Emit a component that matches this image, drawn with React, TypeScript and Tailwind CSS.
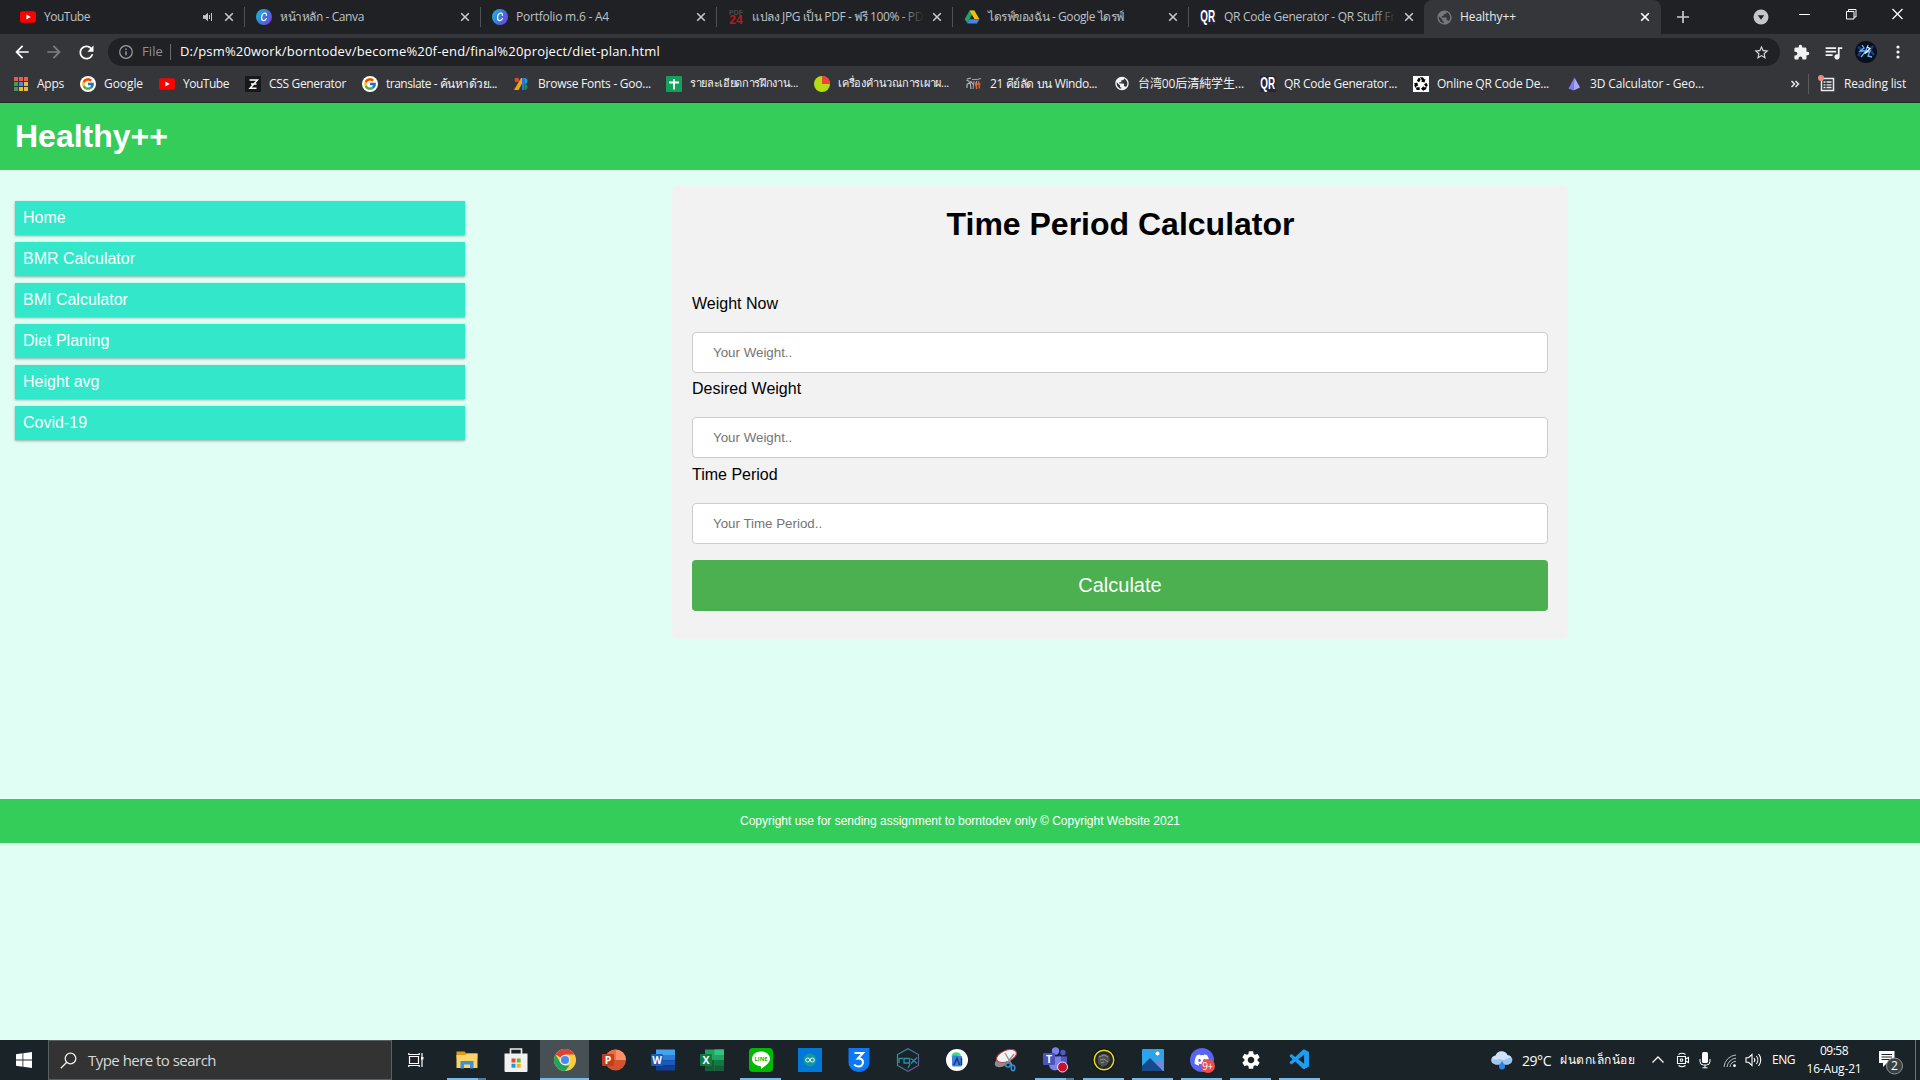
import { useLayoutEffect, useRef, useState } from "react";
import type { ReactNode } from "react";
import { FcGoogle } from "react-icons/fc";
import { MdExtension, MdQueueMusic, MdStarBorder, MdRecycling, MdPublic, MdSettings, MdRefresh, MdArrowBack, MdArrowForward } from "react-icons/md";
import { FaDiscord } from "react-icons/fa";
import { VscVscode } from "react-icons/vsc";

/* Single line of text whose tracking is adjusted so that it spans `w` pixels. */
function Fit({ w, className = "", children }: { w: number; className?: string; children: string }) {
  const ref = useRef<HTMLSpanElement>(null);
  const [spacing, setSpacing] = useState(0);
  useLayoutEffect(() => {
    const el = ref.current;
    if (!el) return;
    const natural = el.getBoundingClientRect().width;
    el.style.letterSpacing = "1px";
    const step = el.getBoundingClientRect().width - natural;
    el.style.letterSpacing = "";
    if (step > 0) setSpacing((w - natural) / step);
  }, [w, children]);
  return (
    <span className={`whitespace-nowrap ${className}`}>
      <span ref={ref} className="inline-block" style={spacing ? { letterSpacing: `${spacing}px` } : undefined}>
        {children}
      </span>
    </span>
  );
}

const YouTubeIcon = () => (
  <svg width="16" height="16" viewBox="0 0 16 16">
    <rect y="2.3" width="16" height="11.4" rx="2.6" fill="#f00" />
    <path d="M6.4 5.4v5.2L10.8 8z" fill="#fff" />
  </svg>
);
const CanvaIcon = () => (
  <svg width="16" height="16" viewBox="0 0 16 16">
    <defs>
      <linearGradient id="cv" x1="0" y1="0.2" x2="1" y2="0.8">
        <stop offset="0" stopColor="#22b3d6" />
        <stop offset="0.5" stopColor="#3a7be0" />
        <stop offset="1" stopColor="#7a3be6" />
      </linearGradient>
    </defs>
    <circle cx="8" cy="8" r="8" fill="url(#cv)" />
    <path d="M10.4 6.3c.3-1.5-.5-2.2-1.5-2.1C7 4.400 5.600 6.600 5.600 8.900c0 1.700.9 2.700 2.100 2.700 1.300 0 2.300-.9 2.800-2" fill="none" stroke="#fff" strokeWidth="1.200" strokeLinecap="round" />
  </svg>
);
const PdfIcon = () => (
  <span className="flex h-4 w-4 flex-col items-center justify-center font-['Liberation_Sans'] font-bold">
    <span className="text-[7px] leading-[6px] text-[#4a4a4d]">PDF</span>
    <span className="text-[12px] leading-[9px] text-[#b01c20]">24</span>
  </span>
);
const DriveIcon = () => (
  <svg width="16" height="16" viewBox="0 0 16 16">
    <path d="M5.600 1.500h4.800L8 5.700 3.300 13.900.6 10.200z" fill="#1fa463" />
    <path d="M5.600 1.500h4.800l5 8.800h-4.900z" fill="#fbbc05" />
    <path d="M5.500 10.300h9.900l-2.500 4.200H3.100z" fill="#4285f4" />
  </svg>
);
const QrIcon = () => (
  <span className="flex h-4 w-4 items-center justify-center bg-[#262438] text-white">
    <span className="scale-x-[0.58] font-['Liberation_Sans'] text-[17px] leading-4 font-bold">QR</span>
  </span>
);
const GlobeIcon = ({ dim }: { dim?: boolean }) => <MdPublic size={17} className={dim ? "text-[#74777b]" : "text-[#f1f3f4]"} />;
const GoogleIcon = () => (
  <span className="flex h-4 w-4 items-center justify-center rounded-full bg-white">
    <FcGoogle size={14} />
  </span>
);
const AppsIcon = () => (
  <svg width="16" height="16" viewBox="0 0 16 16">
    {["#ea5b50", "#ea5b50", "#ea5b50", "#3f9c5b", "#4a86e8", "#e9b93a", "#3f9c5b", "#e9b93a", "#e9b93a"].map((c, i) => (
      <rect key={i} x={1 + (i % 3) * 5} y={1 + Math.floor(i / 3) * 5} width="4" height="4" fill={c} />
    ))}
  </svg>
);
const ZIcon = () => (
  <svg width="16" height="16" viewBox="0 0 16 16">
    <rect width="16" height="16" fill="#17181a" />
    <path d="M4.500 4h8L5 12.200h6.500M6 8h5.500" fill="none" stroke="#fff" strokeWidth="1.400" />
  </svg>
);
const FontsIcon = () => (
  <svg width="16" height="16" viewBox="0 0 16 16">
    <circle cx="2.800" cy="4" r="2.300" fill="#ea4335" />
    <path d="M7 2h4L4.500 14H0z" fill="#f5a600" />
    <path d="M8 2h2.500v12H8z" fill="#2672e8" />
    <path d="M10.500 2a3 3 0 0 1 0 6z" fill="#1a9cf0" />
    <path d="M10.500 8a3 3 0 0 1 0 6z" fill="#1e8e4a" />
  </svg>
);
const SheetIcon = () => (
  <svg width="16" height="16" viewBox="0 0 16 16">
    <rect width="16" height="16" rx="1" fill="#12a05c" />
    <path d="M8 3v10.500M3 6.500h10" stroke="#fff" strokeWidth="1.800" />
  </svg>
);
const PieIcon = () => (
  <svg width="16" height="16" viewBox="0 0 16 16">
    <circle cx="8" cy="8" r="8" fill="#b5dd12" />
    <path d="M8 0a8 8 0 0 1 8 8H8z" fill="#f4403a" />
  </svg>
);
const SpiderIcon = () => (
  <svg width="16" height="16" viewBox="0 0 16 16" fill="none" strokeWidth="1.100">
    <path d="M.5 4l3 1.500M1 12V8.500l4-3 2 3M4 6l1 7M1 3l4-1" stroke="#b9bbbf" />
    <path d="M6 3.500h5l4-1M8 5l-1 8M10.500 5v8" stroke="#a0a2a6" />
    <path d="M9 6.500l2 6.500M12.500 5l1 7.500M10.500 8h4" stroke="#e0622c" strokeWidth="1.400" />
  </svg>
);
const RecycleIcon = () => (
  <span className="flex h-4 w-4 items-center justify-center bg-white text-black">
    <MdRecycling size={16} />
  </span>
);
const PrismIcon = () => (
  <svg width="16" height="16" viewBox="0 0 16 16">
    <path d="M8.500 1.500L2.500 12.500l5 2z" fill="#7f7bf2" />
    <path d="M8.500 1.500l5.500 10-6.500 3z" fill="#a9a6ff" />
  </svg>
);

const CloseX = ({ bright }: { bright?: boolean }) => (
  <svg width="16" height="16" viewBox="0 0 16 16" className={bright ? "text-white" : "text-[#c4c7cb]"}>
    <path d="M4.200 4.200l7.600 7.600M11.800 4.200l-7.600 7.600" stroke="currentColor" strokeWidth="1.600" />
  </svg>
);

type Tab = { icon: ReactNode; label: string; w: number; sound?: boolean; fade?: boolean };
const tabs: Tab[] = [
  { icon: <YouTubeIcon />, label: "YouTube", w: 46, sound: true },
  { icon: <CanvaIcon />, label: "หน้าหลัก - Canva", w: 84 },
  { icon: <CanvaIcon />, label: "Portfolio m.6 - A4", w: 93 },
  { icon: <PdfIcon />, label: "แปลง JPG เป็น PDF - ฟรี 100% - PD", w: 171, fade: true },
  { icon: <DriveIcon />, label: "ไดรฟ์ของฉัน - Google ไดรฟ์", w: 136 },
  { icon: <QrIcon />, label: "QR Code Generator - QR Stuff Fr", w: 171, fade: true },
];

function TabStrip() {
  return (
    <div className="flex h-[34px] bg-[#202124] pl-2 text-[12px] text-[#bdc1c6]">
      {tabs.map((t, i) => (
        <div key={i} className="relative flex w-[236px] shrink-0 items-center pl-3">
          {t.icon}
          <div className="relative ml-2 w-[172px]">
            <Fit w={t.w}>{t.label}</Fit>
            {t.fade && <div className="absolute inset-y-0 right-0 w-6 bg-linear-to-r from-transparent to-[#202124]" />}
          </div>
          {t.sound && (
            <svg width="12" height="12" viewBox="0 0 12 12" className="absolute left-[194px]">
              <path d="M1 4.300h2.200L6 1.800v8.400L3.200 7.700H1z" fill="#c4c7cb" />
              <path d="M7.500 4v4M9.500 2v8" stroke="#c4c7cb" />
            </svg>
          )}
          <span className="ml-[5px] flex">
            <CloseX />
          </span>
          {i < tabs.length - 1 && <span className="absolute top-[7px] -right-px h-5 w-px bg-[#4d5054]" />}
        </div>
      ))}
      <div className="relative flex w-[237px] shrink-0 items-center rounded-t-lg bg-[#35363a] pl-3 text-[#e8eaed]">
        <GlobeIcon dim />
        <div className="ml-[7px] w-[172px]">
          <Fit w={56}>Healthy++</Fit>
        </div>
        <span className="ml-[5px] flex">
          <CloseX bright />
        </span>
      </div>
      <div className="flex flex-1 items-center text-[#c8cacd]">
        <svg width="14" height="14" viewBox="0 0 14 14" className="ml-[15px]">
          <path d="M7 1v12M1 7h12" stroke="currentColor" strokeWidth="1.700" />
        </svg>
        <svg width="16" height="16" viewBox="0 0 16 16" className="ml-[63px]">
          <circle cx="8" cy="8" r="7.500" fill="#c3c6ca" />
          <path d="M4.800 6.200h6.400L8 10.700z" fill="#202124" />
        </svg>
        <svg width="110" height="14" viewBox="0 0 110 14" fill="none" stroke="#fff" className="mb-[6px] ml-[28px] shrink-0">
          <path d="M2 7.500h11" />
          <path d="M49.500 4.500h7.500v7.500h-7.500zM51.500 4.500v-2h7.500v7.500h-2" />
          <path d="M95.500 2l10 10M105.500 2l-10 10" strokeWidth="1.200" />
        </svg>
      </div>
    </div>
  );
}

function Toolbar() {
  return (
    <div className="flex h-9 items-center text-white">
      <MdArrowBack size={20} className="ml-3" />
      <MdArrowForward size={20} className="ml-3 text-[#7d8084]" />
      <MdRefresh size={21} className="ml-3" />
      <div className="ml-[11px] flex h-7 w-[1672px] items-center rounded-full bg-[#202124] text-[14px]">
        <svg width="14" height="14" viewBox="0 0 14 14" className="ml-[11px]" fill="none" stroke="#9aa0a6">
          <circle cx="7" cy="7" r="6.300" strokeWidth="1.200" />
          <path d="M7 6.300v4M7 3.600v1.400" strokeWidth="1.400" />
        </svg>
        <Fit w={21} className="ml-[9px] text-[13px] text-[#8e9297]">File</Fit>
        <span className="ml-[7px] h-4 w-px bg-[#6a6d71]" />
        <Fit w={480} className="ml-[9px] text-[13px]">D:/psm%20work/borntodev/become%20f-end/final%20project/diet-plan.html</Fit>
        <MdStarBorder size={17} className="mr-[10px] ml-auto text-[#d5d7da]" />
      </div>
      <MdExtension size={17} className="ml-[13px] text-[#f1f3f4]" />
      <MdQueueMusic size={21} className="ml-[13px] text-[#f1f3f4]" />
      <svg width="22" height="22" viewBox="0 0 22 22" className="ml-[11px]">
        <circle cx="11" cy="11" r="11" fill="#07101f" />
        <path d="M3 6l4 3-4 6M18 5l-3 4 4 5" stroke="#1b3f78" strokeWidth="2.500" fill="none" />
        <path d="M7 4l2 3-4 3h6l-5 6M13 4l-3 8 5-2-2 5 4 1" stroke="#69b4ff" strokeWidth="1.300" fill="none" />
        <path d="M12 6l3 1.500-5 5" stroke="#fff" strokeWidth="1.200" fill="none" />
      </svg>
      <svg width="4" height="16" viewBox="0 0 4 16" className="ml-[19px]" fill="#f1f3f4">
        <circle cx="2" cy="3" r="1.600" />
        <circle cx="2" cy="8" r="1.600" />
        <circle cx="2" cy="13" r="1.600" />
      </svg>
    </div>
  );
}

/* `slot` is the full width that the entry takes, `w` the width of its label. */
const bookmarks: { icon: ReactNode; label: string; w: number; slot: string }[] = [
  { icon: <AppsIcon />, label: "Apps", w: 27, slot: "w-[67px]" },
  { icon: <GoogleIcon />, label: "Google", w: 39, slot: "w-[79px]" },
  { icon: <YouTubeIcon />, label: "YouTube", w: 46, slot: "w-[86px]" },
  { icon: <ZIcon />, label: "CSS Generator", w: 77, slot: "w-[117px]" },
  { icon: <GoogleIcon />, label: "translate - ค้นหาด้วย...", w: 111, slot: "w-[152px]" },
  { icon: <FontsIcon />, label: "Browse Fonts - Goo...", w: 113, slot: "w-[152px]" },
  { icon: <SheetIcon />, label: "รายละเอียดการฝึกงาน...", w: 108, slot: "w-[148px] text-[11px]" },
  { icon: <PieIcon />, label: "เครื่องคำนวณการเผาผ...", w: 111, slot: "w-[152px] text-[11px]" },
  { icon: <SpiderIcon />, label: "21 คีย์ลัด บน Windo...", w: 107, slot: "w-[148px]" },
  { icon: <GlobeIcon />, label: "台湾00后清純学生...", w: 106, slot: "w-[146px]" },
  { icon: <QrIcon />, label: "QR Code Generator...", w: 113, slot: "w-[153px]" },
  { icon: <RecycleIcon />, label: "Online QR Code De...", w: 112, slot: "w-[153px]" },
  { icon: <PrismIcon />, label: "3D Calculator - Geo...", w: 114, slot: "w-[154px]" },
];
const slotClass = "flex shrink-0 items-center gap-2";

function Bookmarks() {
  return (
    <div className="flex h-[33px] items-center border-b border-[#1d2a22] pb-[5px] pl-[13px] text-[12px] text-[#f1f3f4]">
      {bookmarks.map((b, i) => (
        <div key={i} className={`${slotClass} ${b.slot}`}>
          <span className="flex w-4 shrink-0 justify-center">{b.icon}</span>
          <Fit w={b.w}>{b.label}</Fit>
        </div>
      ))}
      <svg width="10" height="10" viewBox="0 0 10 10" className="ml-[70px]" fill="none" stroke="#e8eaed" strokeWidth="1.500">
        <path d="M1.500 2l3 3-3 3M5.500 2l3 3-3 3" />
      </svg>
      <span className="ml-2 h-5 w-px bg-[#5a5c60]" />
      <svg width="18" height="18" viewBox="0 0 18 18" className="ml-[9px]">
        <path d="M3.500 3.500h12v12h-12z" fill="none" stroke="#e8eaed" strokeWidth="1.500" />
        <path d="M5.500 7h2M8.500 7h5M5.500 9.800h2M8.500 9.800h5M5.500 12.500h2M8.500 12.500h5" stroke="#e8eaed" strokeWidth="1.300" />
        <circle cx="3" cy="3" r="3" fill="#f28b82" />
      </svg>
      <Fit w={62} className="ml-[8px]">Reading list</Fit>
    </div>
  );
}

const menu = ["Home", "BMR Calculator", "BMI Calculator", "Diet Planing", "Height avg", "Covid-19"];
const fields = [
  { label: "Weight Now", hint: "Your Weight.." },
  { label: "Desired Weight", hint: "Your Weight.." },
  { label: "Time Period", hint: "Your Time Period.." },
];

function Page() {
  return (
    <div className="h-[937px] bg-[#e1fef5] font-['Liberation_Sans',Arial,sans-serif] text-base text-black">
      <header className="h-[67px] bg-[#34cd5a] px-[15px] pt-[15px]">
        <h1 className="text-[32px] leading-[37px] font-bold text-white">Healthy++</h1>
      </header>
      <main className="flex h-[629px] items-start">
        <ul className="mt-[31px] ml-[15px] flex w-[450px] flex-col gap-[7px]">
          {menu.map((m) => (
            <li key={m} className="h-[34px] bg-[#33e7ca] pl-2 leading-[33px] text-white shadow-[0_1px_3px_rgba(0,0,0,0.12),0_1px_2px_rgba(0,0,0,0.24)]">
              {m}
            </li>
          ))}
        </ul>
        <section className="mt-4 ml-[207px] h-[452.500px] w-[896px] rounded-[5px] bg-[#f2f2f2] px-5 pt-5">
          <h2 className="pl-px text-center text-[32px] leading-[37px] font-bold">Time Period Calculator</h2>
          <form className="mt-[52px]">
            {fields.map((f) => (
              <label key={f.label} className="flex flex-col pb-[7.330px]">
                <span className="h-[37px] leading-[18px]">{f.label}</span>
                <input
                  placeholder={f.hint}
                  className="h-[41px] w-full rounded border border-[#ccc] bg-white px-5 text-[13.333px] placeholder:text-[#757575]"
                />
              </label>
            ))}
            <button type="button" className="mt-[9px] block h-[51px] w-full rounded bg-[#4caf50] pb-px text-center text-[20px] text-white">
              Calculate
            </button>
          </form>
        </section>
      </main>
      <footer className="flex h-[44px] items-center justify-center bg-[#34cd5a] text-[12px] text-white">
        <Fit w={440}>Copyright use for sending assignment to borntodev only © Copyright Website 2021</Fit>
      </footer>
    </div>
  );
}

const FolderIcon = () => (
  <svg width="24" height="24" viewBox="0 0 24 24">
    <path d="M1.500 3.500h8l2 2h11v5h-21z" fill="#d99b1c" />
    <path d="M1.500 7h9l1.500-1.500h10.500v14.500h-21z" fill="#fbd267" />
    <path d="M5.500 20.500v-7.500h13v7.500h-3.500v-4h-6v4z" fill="#3a93d6" />
  </svg>
);
const StoreIcon = () => (
  <svg width="24" height="24" viewBox="0 0 24 24">
    <path d="M6.500 7V1h11v6" fill="none" stroke="#eee" strokeWidth="1.600" />
    <path d="M.5 5.500h23V23a1 1 0 0 1-1 1h-21a1 1 0 0 1-1-1z" fill="#f1f1f1" />
    <path d="M7.500 10.500h4v4h-4z" fill="#e04e2a" />
    <path d="M12.700 10.500h4v4h-4z" fill="#7ab51d" />
    <path d="M7.500 15.700h4v4h-4z" fill="#0f9fe8" />
    <path d="M12.700 15.700h4v4h-4z" fill="#f7b50c" />
  </svg>
);
const ChromeIcon = () => (
  <svg width="22" height="22" viewBox="0 0 22 22">
    <circle cx="11" cy="11" r="11" fill="#fbcd3b" />
    <path d="M11 11L1.500 5.500A11 11 0 0 1 20.500 5.500H11z" fill="#dc4437" />
    <path d="M1.500 5.500L6.300 13.800 11 16.500h4.500L11 22A11 11 0 0 1 1.500 5.500z" fill="#1da362" />
    <circle cx="11" cy="11" r="5.200" fill="#f3f3f3" />
    <circle cx="11" cy="11" r="4.100" fill="#4a8af4" />
  </svg>
);
const PowerPointIcon = () => (
  <svg width="24" height="24" viewBox="0 0 24 24">
    <circle cx="13.500" cy="12" r="10.500" fill="#d35230" />
    <path d="M13.500 1.500A10.500 10.500 0 0 1 24 12H13.500z" fill="#ff8f6b" />
    <path d="M13.500 1.500A10.500 10.500 0 0 0 3 12h10.500z" fill="#ed6c47" />
    <rect y="6" width="12" height="12" rx="1" fill="#c43e1c" />
    <text x="6" y="15.700" textAnchor="middle" fontSize="10.500" fontWeight="700" fontFamily="Open Sans" fill="#fff">P</text>
  </svg>
);
const WordIcon = () => (
  <svg width="24" height="24" viewBox="0 0 24 24">
    <path d="M5 1.500h19V7H5z" fill="#41a5ee" />
    <path d="M5 7h19v5.200H5z" fill="#2b7cd3" />
    <path d="M5 12.200h19v5.200H5z" fill="#185abd" />
    <path d="M5 17.400h19v5.100H5z" fill="#103f91" />
    <rect y="6" width="12" height="12" rx="1" fill="#185abd" />
    <text x="6" y="15.500" textAnchor="middle" fontSize="10" fontWeight="700" fontFamily="Open Sans" fill="#fff">W</text>
  </svg>
);
const ExcelIcon = () => (
  <svg width="24" height="24" viewBox="0 0 24 24">
    <path d="M5 1.500h19v21H5z" fill="#21a366" />
    <path d="M14.500 1.500H24V7h-9.500z" fill="#33c481" />
    <path d="M5 12h9.500v10.500H5z" fill="#185c37" />
    <path d="M14.500 12H24v5.200h-9.500z" fill="#107c41" />
    <path d="M14.500 17.200H24v5.300h-9.500z" fill="#185c37" />
    <rect y="6" width="12" height="12" rx="1" fill="#107c41" />
    <text x="6" y="15.700" textAnchor="middle" fontSize="10.500" fontWeight="700" fontFamily="Open Sans" fill="#fff">X</text>
  </svg>
);
const LineIcon = () => (
  <svg width="24" height="24" viewBox="0 0 24 24">
    <rect width="24" height="24" rx="4" fill="#00b900" />
    <path d="M12 3.500c5 0 9 3.200 9 7.300 0 3.900-4 6.800-9 10.200.2-1.500 0-2.700-.8-2.900C6.500 17.700 3 14.700 3 10.800c0-4.100 4-7.300 9-7.300z" fill="#fff" />
    <text x="12" y="12.900" textAnchor="middle" fontSize="5.600" fontWeight="700" fontFamily="Open Sans" textLength="13" fill="#00b900">LINE</text>
  </svg>
);
const ArduinoIcon = () => (
  <svg width="24" height="24" viewBox="0 0 24 24">
    <rect width="24" height="24" fill="#0078d7" />
    <circle cx="12" cy="12" r="6.500" fill="#1597a0" />
    <circle cx="9.700" cy="12" r="2" fill="none" stroke="#e8ffff" />
    <circle cx="14.300" cy="12" r="2" fill="none" stroke="#e8ffff" />
  </svg>
);
const ThreeIcon = () => (
  <svg width="22" height="24" viewBox="0 0 22 24">
    <path d="M.5 0h21v14.500C21.500 20 16.500 24 11 24S.5 20 .5 14.500z" fill="#0b78f5" />
    <path d="M6.500 5h8.500l-5 5.500c3.200-.3 5 1.500 5 3.800 0 2.600-2 4.200-4.500 4.200-2 0-3.500-.8-4.300-2" fill="none" stroke="#fff" strokeWidth="2.100" />
  </svg>
);
const NoxIcon = () => (
  <svg width="24" height="24" viewBox="0 0 24 24">
    <defs>
      <linearGradient id="nx" x1="0" y1="0" x2="1" y2="1">
        <stop offset="0" stopColor="#2a9c9c" />
        <stop offset="1" stopColor="#7a4b9c" />
      </linearGradient>
    </defs>
    <path d="M12 .8l10.500 5.700v11L12 23.200 1.500 17.500v-11z" fill="none" stroke="url(#nx)" strokeWidth="1.200" />
    <path d="M3 15v-4.500h4M8 10.500h5.500v4.500H8zM15 10.500l6 5M21 9.500l-6 6M12 20l2-4" fill="none" stroke="#2a8fa5" strokeWidth="1.300" />
  </svg>
);
const StudioIcon = () => (
  <svg width="22" height="22" viewBox="0 0 22 22">
    <circle cx="11" cy="11" r="11" fill="#fff" />
    <path d="M5.500 8a5 5 0 0 1 9.500-2z" fill="#3ddc84" />
    <rect x="6" y="6.500" width="10" height="11" rx="1.500" fill="#3c82e6" />
    <path d="M8 16l3-7 2.500 7M15.500 9v7" fill="none" stroke="#153b72" strokeWidth="1.500" />
  </svg>
);
const SnipIcon = () => (
  <svg width="26" height="24" viewBox="0 0 26 24">
    <ellipse cx="10" cy="13" rx="9" ry="5" transform="rotate(-30 10 13)" fill="#8b8e90" />
    <ellipse cx="13.500" cy="8" rx="10.500" ry="5.500" transform="rotate(-22 13.500 8)" fill="#f2f3f4" stroke="#d33a3a" />
    <path d="M12 5l7 12M21 6l-7 9" stroke="#8c969e" strokeWidth="1.400" />
    <ellipse cx="15" cy="17" rx="2.500" ry="1.900" fill="none" stroke="#3190d6" strokeWidth="1.500" />
    <ellipse cx="20" cy="20" rx="1.800" ry="2.700" fill="none" stroke="#3190d6" strokeWidth="1.500" />
  </svg>
);
const TeamsIcon = () => (
  <svg width="26" height="26" viewBox="0 0 26 26">
    <circle cx="21" cy="5.500" r="2.700" fill="#5059c9" />
    <circle cx="13.500" cy="4" r="3.700" fill="#7b83eb" />
    <path d="M16 9.500h9v7a4 4 0 0 1-7 2.500z" fill="#5059c9" />
    <path d="M7 9.500h12v8a6 6 0 0 1-12 0z" fill="#7b83eb" />
    <rect x="1" y="6" width="12" height="12" rx="1" fill="#4b53bc" />
    <text x="7" y="15.700" textAnchor="middle" fontSize="10.500" fontWeight="700" fontFamily="Open Sans" fill="#fff">T</text>
    <circle cx="20.500" cy="20" r="5" fill="#c4112d" stroke="#f5e9ec" />
  </svg>
);
const BadgeIcon = () => (
  <svg width="24" height="24" viewBox="0 0 24 24">
    <circle cx="12" cy="12" r="11.500" fill="#0e0f10" />
    <circle cx="12" cy="12" r="9.800" fill="#26282a" stroke="#e6df1c" strokeWidth="1.400" />
    <path d="M6 9c3-4 7-4 11-1l1 4-3 5-5 2-4-4z" fill="#4d5052" />
    <path d="M7 9l5-2 4 2M8 12l4-1 4 3M9 15l3-1" stroke="#8f9192" fill="none" />
  </svg>
);
const PhotosIcon = () => (
  <svg width="22" height="22" viewBox="0 0 22 22">
    <rect width="22" height="22" rx="1" fill="#2ba4ea" />
    <path d="M12 15l5.500-5.500L22 14v8h-9z" fill="#6a8be0" />
    <path d="M0 17L8 9l13 13H1a1 1 0 0 1-1-1z" fill="#174a8b" />
    <circle cx="15.500" cy="4.500" r="2" fill="#fff" />
  </svg>
);
const DiscordIcon = () => (
  <span className="relative flex h-6 w-6 items-center justify-center rounded-full bg-[#5865f2] text-white">
    <FaDiscord size={16} />
    <span className="absolute right-[-1px] bottom-[-1px] flex h-[14px] w-[14px] items-center justify-center rounded-full bg-[#ec4b4f] text-[10px] tracking-[-0.5px]">9+</span>
  </span>
);

type Run = "none" | "open" | "stacked" | "active";
const apps: { icon: ReactNode; run: Run }[] = [
  { icon: <FolderIcon />, run: "stacked" },
  { icon: <StoreIcon />, run: "none" },
  { icon: <ChromeIcon />, run: "active" },
  { icon: <PowerPointIcon />, run: "none" },
  { icon: <WordIcon />, run: "none" },
  { icon: <ExcelIcon />, run: "none" },
  { icon: <LineIcon />, run: "open" },
  { icon: <ArduinoIcon />, run: "none" },
  { icon: <ThreeIcon />, run: "none" },
  { icon: <NoxIcon />, run: "none" },
  { icon: <StudioIcon />, run: "none" },
  { icon: <SnipIcon />, run: "none" },
  { icon: <TeamsIcon />, run: "stacked" },
  { icon: <BadgeIcon />, run: "open" },
  { icon: <PhotosIcon />, run: "open" },
  { icon: <DiscordIcon />, run: "open" },
  { icon: <MdSettings size={22} className="text-white" />, run: "open" },
  { icon: <VscVscode size={24} className="text-[#1f9cf0]" />, run: "open" },
];

function Taskbar() {
  return (
    <div className="flex h-10 items-center bg-[#1a2328] text-white">
      <svg width="16" height="16" viewBox="0 0 16 16" className="ml-4" fill="#fff">
        <path d="M0 2.200l6.500-.9v6.200H0zM7.300 1.200L16 0v7.500H7.300zM0 8.400h6.500v6.300L0 13.800zM7.300 8.400H16V16l-8.700-1.200z" />
      </svg>
      <div className="ml-4 flex h-10 w-[344px] items-center border border-[#5a6062] bg-[#333] text-[15px] text-[#d8d8d8]">
        <svg width="17" height="17" viewBox="0 0 17 17" className="ml-[11px]" fill="none" stroke="#f0f0f0" strokeWidth="1.300">
          <circle cx="10.500" cy="6.500" r="5.300" />
          <path d="M6.800 10.200L.8 16.200" />
        </svg>
        <Fit w={128} className="ml-[11px]">Type here to search</Fit>
      </div>
      <div className="flex w-[50px] justify-center pr-[3px]">
        <svg width="16" height="16" viewBox="0 0 16 16" fill="none" stroke="#fff" strokeWidth="1.200">
          <path d="M1.500 4.500h9v7h-9zM.8 1v1.500h10.400V1M.8 15v-1.500h10.400V15M14 1v14" />
          <path d="M13 5h2.500v2.500H13z" fill="#fff" stroke="none" />
        </svg>
      </div>
      {apps.map((a, i) => (
        <div key={i} className={a.run === "active" ? "relative flex h-10 w-[49px] items-center justify-center bg-[#475054]" : "relative flex h-10 w-[49px] items-center justify-center"}>
          {a.icon}
          {a.run === "active" && <span className="absolute inset-x-0 bottom-0 h-[2px] bg-[#76b9ed]" />}
          {a.run === "open" && <span className="absolute inset-x-1 bottom-0 h-[2px] bg-[#76b9ed]" />}
          {a.run === "stacked" && (
            <span className="absolute inset-x-[5px] bottom-0 flex h-[2px]">
              <span className="flex-1 bg-[#76b9ed]" />
              <span className="w-[8px] bg-[#527a99]" />
            </span>
          )}
        </div>
      ))}
      <svg width="22" height="20" viewBox="0 0 22 20" className="ml-[167px]">
        <path d="M5 14.500a4.500 4.500 0 0 1-.5-9A6.500 6.500 0 0 1 16.500 5a4.800 4.800 0 0 1 .5 9.500z" fill="#cfe4fa" />
        <path d="M5 14.500a4.500 4.500 0 0 1-3.500-6c3 3 6-1 9 1s6-3 10.500-1.500a4.800 4.800 0 0 1-4 6.500z" fill="#9cc6f2" />
        <path d="M11 11c2 3 3 4 3 5.500a3 3 0 0 1-6 0c0-1.500 1-2.500 3-5.500z" fill="#3186dc" />
      </svg>
      <Fit w={29} className="ml-[9px] text-[14px]">29°C</Fit>
      <Fit w={75} className="ml-[9px] text-[12px]">ฝนตกเล็กน้อย</Fit>
      <svg width="14" height="10" viewBox="0 0 14 10" className="ml-4" fill="none" stroke="#fff" strokeWidth="1.300">
        <path d="M1.500 7.500L7 2l5.500 5.500" />
      </svg>
      <svg width="14" height="18" viewBox="0 0 14 18" className="ml-[11px]" fill="none" stroke="#fff" strokeWidth="1.100">
        <path d="M1.500 5.500h8v7h-8zM9.500 8l3-1.500v5l-3-1.500M2.500 3.500a6 6 0 0 1 7 0M2.500 14.500a6 6 0 0 0 7 0" />
        <circle cx="5.500" cy="9" r="1.300" />
      </svg>
      <svg width="12" height="18" viewBox="0 0 12 18" className="ml-[9px]">
        <rect x="3" y="1" width="6" height="11" rx="1.500" fill="#fff" />
        <path d="M1 8v2.500a3.500 3.500 0 0 0 3.500 3.500h3a3.500 3.500 0 0 0 3.500-3.500V8M6 14v3M3.500 16.800h5" fill="none" stroke="#fff" />
      </svg>
      <svg width="14" height="15" viewBox="0 0 14 15" className="ml-[12px]" fill="none" stroke="#b9bdbf">
        <path d="M1 14A13 13 0 0 1 13 2M4 14a10 10 0 0 1 9-8.800M7 14a6.500 6.500 0 0 1 6-5.700" />
        <circle cx="11.500" cy="12.700" r="1.400" fill="#fff" stroke="none" />
      </svg>
      <svg width="18" height="14" viewBox="0 0 18 14" className="ml-2" fill="none" stroke="#fff" strokeWidth="1.100">
        <path d="M1 4.700h2.500L7 1.500v11L3.500 9.300H1zM9 5a3 3 0 0 1 0 4M11.300 3a6 6 0 0 1 0 8M13.600 1.200a9 9 0 0 1 0 11.600" />
      </svg>
      <Fit w={23} className="mb-px ml-[9px] text-[12px]">ENG</Fit>
      <div className="ml-[11px] flex w-[56px] flex-col items-center text-[12px] leading-[18px]">
        <Fit w={28}>09:58</Fit>
        <Fit w={55}>16-Aug-21</Fit>
      </div>
      <svg width="26" height="26" viewBox="0 0 26 26" className="mt-1 ml-4">
        <path d="M1 2h15.500v12H9l-4 4v-4H1z" fill="#fff" />
        <path d="M3.500 5.500h10.500M3.500 8h10.500M3.500 10.500h10.500" stroke="#1a2328" />
        <circle cx="16.500" cy="17" r="8" fill="#3a4145" stroke="#8d9294" />
        <text x="16.500" y="21.200" textAnchor="middle" fontSize="12" fontFamily="Open Sans" fill="#fff">2</text>
      </svg>
      <span className="mr-1 ml-auto h-10 w-px bg-[#6d7376]" />
    </div>
  );
}

export default function App() {
  return (
    <div className="h-[1080px] w-[1920px] overflow-hidden bg-[#35363a] font-['Open_Sans','Noto_Sans','Noto_Sans_CJK_TC',sans-serif]">
      <TabStrip />
      <Toolbar />
      <Bookmarks />
      <Page />
      <Taskbar />
    </div>
  );
}
